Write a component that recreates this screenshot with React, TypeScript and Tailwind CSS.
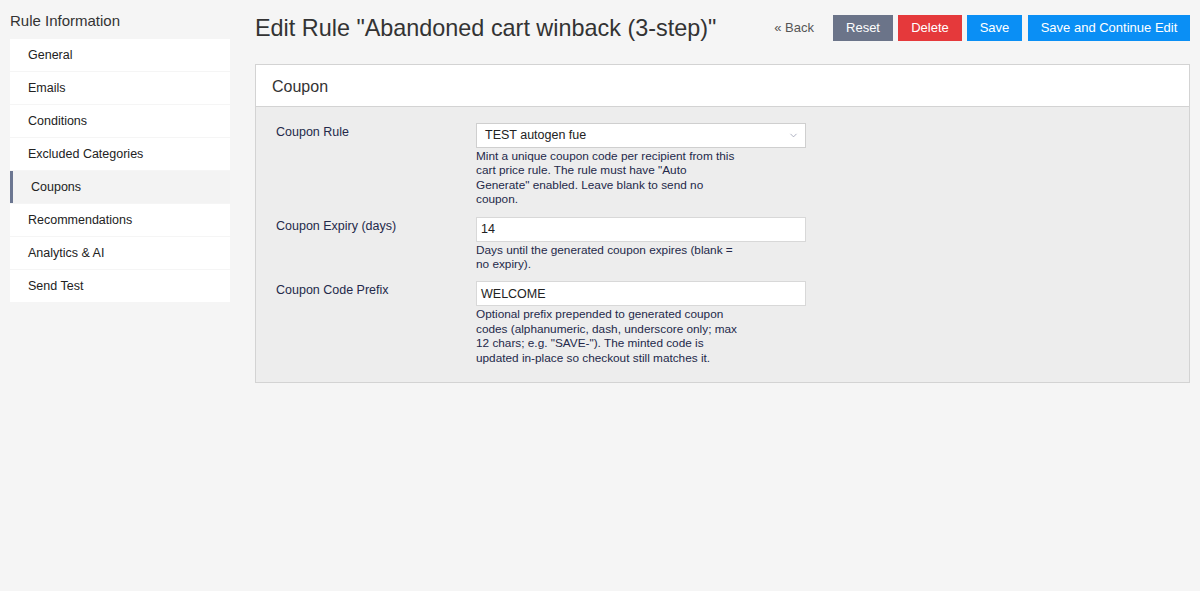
import { ChevronDown } from 'lucide-react';

const navItems = [
  'General',
  'Emails',
  'Conditions',
  'Excluded Categories',
  'Coupons',
  'Recommendations',
  'Analytics & AI',
  'Send Test',
];

interface FieldRowProps {
  label: string;
  help: string;
  children: React.ReactNode;
}

function FieldRow({ label, help, children }: FieldRowProps) {
  return (
    <div className="flex">
      <div className="w-[220px] shrink-0 pt-[1px] pl-[20px] text-[12.5px] leading-[16px] text-[#24294a]">{label}</div>
      <div className="flex flex-col">
        {children}
        <p className="w-[265px] mt-[1px] text-[11.8px] leading-[14.4px] text-[#24294a]">{help}</p>
      </div>
    </div>
  );
}

export default function App() {
  return (
    <div className="min-h-[591px] bg-[#f5f5f5] flex font-['Liberation_Sans',Arial,sans-serif] text-[#333]">
      {/* Sidebar */}
      <aside className="w-[220px] ml-[10px] shrink-0">
        <h2 className="text-[15px] leading-[20px] mt-[11px] mb-[8px] text-[#333]">Rule Information</h2>
        <ul className="flex flex-col gap-px">
          {navItems.map((item) => {
            const active = item === 'Coupons';
            return (
              <li
                key={item}
                className={
                  active
                    ? 'h-[32px] flex items-center pl-[18px] border-l-[3px] border-[#6b7691] bg-[#f3f3f3] text-[12.5px] text-[#222]'
                    : 'h-[32px] flex items-center pl-[18px] bg-white text-[12.5px] text-[#222]'
                }
              >
                {item}
              </li>
            );
          })}
        </ul>
      </aside>

      {/* Main */}
      <main className="flex-1 ml-[25px] mr-[10px]">
        <div className="flex items-center justify-between h-[54px] pt-[2px]">
          <h1 className="text-[23.4px] leading-[28px] text-[#333]">
            Edit Rule "Abandoned cart winback (3-step)"
          </h1>
          <div className="flex items-center gap-[5px] text-[13px]">
            <button className="px-[6px] mr-[8px] text-[#555]">« Back</button>
            <button className="h-[26px] w-[60px] bg-[#6b7489] text-white">Reset</button>
            <button className="h-[26px] w-[64px] bg-[#e5393b] text-white">Delete</button>
            <button className="h-[26px] w-[55px] bg-[#0a8ff5] text-white">Save</button>
            <button className="h-[26px] w-[162px] ml-px bg-[#0a8ff5] text-white">Save and Continue Edit</button>
          </div>
        </div>

        <section className="mt-[10px] border border-[#d3d3d3]">
          <div className="h-[42px] bg-white border-b border-[#d3d3d3] flex items-center pl-[16px] pt-[2px] text-[16px] text-[#333]">
            Coupon
          </div>
          <div className="bg-[#ededed] pt-[16px] pb-[17px] flex flex-col gap-[10px]">
            <FieldRow
              label="Coupon Rule"
              help={'Mint a unique coupon code per recipient from this cart price rule. The rule must have "Auto Generate" enabled. Leave blank to send no coupon.'}
            >
              <div className="w-[330px] h-[25px] bg-white border border-[#cfcfcf] flex items-center justify-between pl-[8px] pr-[6px] text-[12.5px] text-[#222]">
                <span>TEST autogen fue</span>
                <ChevronDown className="w-[11px] h-[11px] text-[#8a8fa8]" strokeWidth={1.5} />
              </div>
            </FieldRow>
            <FieldRow label="Coupon Expiry (days)" help="Days until the generated coupon expires (blank = no expiry).">
              <div className="w-[330px] h-[25px] bg-white border border-[#d8d8d8] flex items-center pl-[4px] text-[12.5px] text-[#222]">
                14
              </div>
            </FieldRow>
            <FieldRow
              label="Coupon Code Prefix"
              help={'Optional prefix prepended to generated coupon codes (alphanumeric, dash, underscore only; max 12 chars; e.g. "SAVE-"). The minted code is updated in-place so checkout still matches it.'}
            >
              <div className="w-[330px] h-[25px] bg-white border border-[#d8d8d8] flex items-center pl-[4px] text-[12.5px] text-[#222]">
                WELCOME
              </div>
            </FieldRow>
          </div>
        </section>
      </main>
    </div>
  );
}
